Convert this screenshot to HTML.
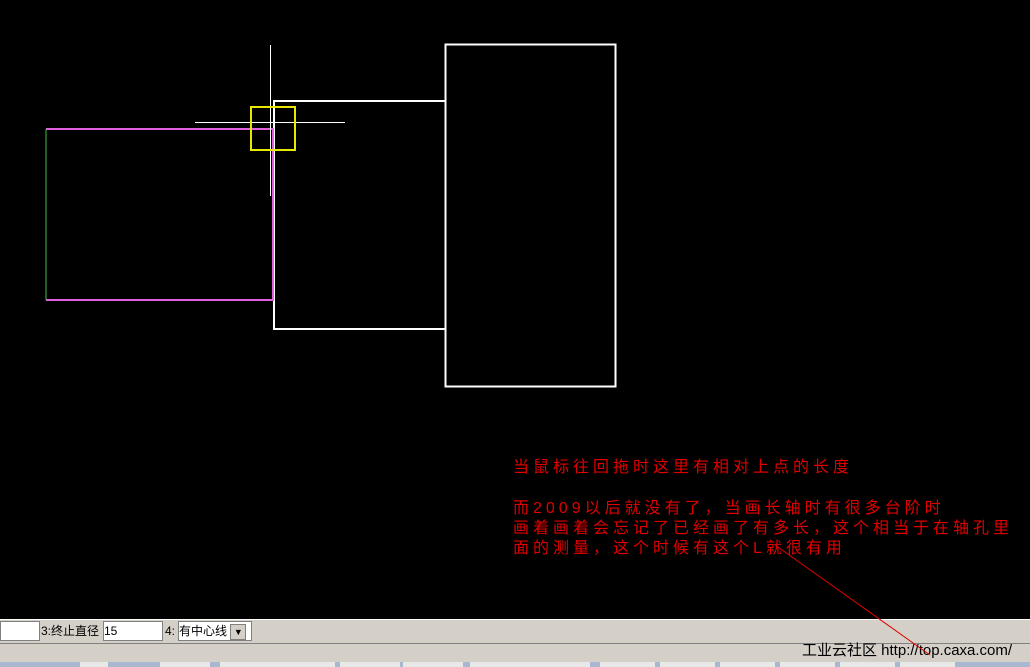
<!DOCTYPE html>
<html><head><meta charset="utf-8"><style>
body{margin:0;width:1030px;height:667px;overflow:hidden;background:#000;position:relative;font-family:"Liberation Sans","Noto Sans CJK SC",sans-serif}
.t{position:absolute;left:513px;color:#e00000;font-size:16px;letter-spacing:4px;line-height:20px;white-space:nowrap}
.bar{position:absolute;left:0;width:1030px;background:#d4d0c8}
.inp{position:absolute;background:#fff;border:1px solid #808080;height:18px;font-size:12px;line-height:18px}
.lb{position:absolute;font-size:12px;line-height:20px;color:#000}
</style></head><body>
<svg width="1030" height="667" style="position:absolute;left:0;top:0">
<rect x="445.5" y="44.5" width="170" height="342" fill="none" stroke="#fff" stroke-width="2"/>
<polyline points="445,101 274,101 274,329 445,329" fill="none" stroke="#fff" stroke-width="2"/>
<polyline points="46,129 273,129 273,300 46,300" fill="none" stroke="#e060e0" stroke-width="2"/>
<line x1="46" y1="129" x2="46" y2="300" stroke="#40c040" stroke-width="1"/>
<line x1="270.5" y1="45" x2="270.5" y2="196" stroke="#fff" stroke-width="1"/>
<line x1="195" y1="122.5" x2="345" y2="122.5" stroke="#fff" stroke-width="1"/>
<rect x="251" y="107" width="44" height="43" fill="none" stroke="#e8e800" stroke-width="2"/>
</svg>
<div class="t" style="top:458px">当鼠标往回拖时这里有相对上点的长度</div>
<div class="t" style="top:499px">而2009以后就没有了，当画长轴时有很多台阶时</div>
<div class="t" style="top:519px">画着画着会忘记了已经画了有多长，这个相当于在轴孔里</div>
<div class="t" style="top:539px">面的测量，这个时候有这个L就很有用</div>
<div class="bar" style="top:619px;height:24px;border-top:1px solid #fff"></div>
<div class="inp" style="left:0;top:621px;width:38px"></div>
<div class="lb" style="left:41px;top:621px">3:终止直径</div>
<div class="inp" style="left:103px;top:621px;width:58px">15</div>
<div class="lb" style="left:165px;top:621px">4:</div>
<div class="inp" style="left:178px;top:621px;width:72px">有中心线 <span style="display:inline-block;width:14px;height:14px;background:#d4d0c8;border:1px solid #808080;font-size:9px;text-align:center;line-height:14px">▼</span></div>
<div class="bar" style="top:643px;height:19px;border-top:1px solid #808080"></div>
<div class="lb" style="left:802px;top:641px;font-size:15px">工业云社区 http://top.caxa.com/</div>
<div class="bar" style="top:662px;height:5px;background:#a8b8d0"></div>
<svg width="1030" height="5" style="position:absolute;left:0;top:662px">
<g fill="#e8e8e8"><rect x="80" y="0" width="28" height="5"/><rect x="160" y="0" width="50" height="5"/><rect x="220" y="0" width="115" height="5"/><rect x="340" y="0" width="60" height="5"/><rect x="403" y="0" width="60" height="5"/><rect x="470" y="0" width="120" height="5"/><rect x="600" y="0" width="55" height="5"/><rect x="660" y="0" width="55" height="5"/><rect x="720" y="0" width="55" height="5"/><rect x="780" y="0" width="55" height="5"/><rect x="840" y="0" width="55" height="5"/><rect x="900" y="0" width="55" height="5"/></g>
</svg>
<svg width="1030" height="667" style="position:absolute;left:0;top:0">
<line x1="775" y1="545" x2="930" y2="655" stroke="#e00000" stroke-width="1"/>
</svg>
</body></html>
